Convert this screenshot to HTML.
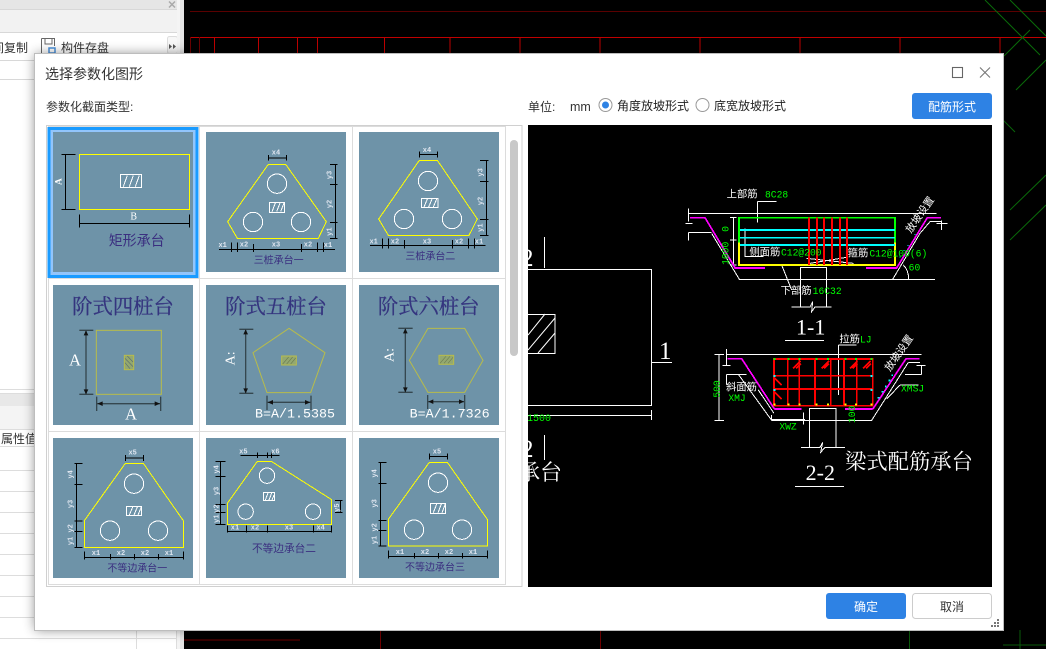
<!DOCTYPE html>
<html lang="zh"><head><meta charset="utf-8"><title>选择参数化图形</title>
<style>
html,body{margin:0;padding:0;background:#000;width:1046px;height:649px;overflow:hidden}
svg{position:absolute;left:0;top:0;display:block;font-family:"Liberation Sans","Noto Sans CJK SC",sans-serif}
.cr path,.cr rect,.cr circle{shape-rendering:crispEdges}
.ui{font-size:12px;fill:#333}
.y{fill:none;stroke:#ff0;stroke-width:3}
.o{fill:none;stroke:#b8bc4a;stroke-width:3}
.w{fill:none;stroke:#fff;stroke-width:3}
.k{fill:none;stroke:#000;stroke-width:3}
.d{fill:none;stroke:#35474f;stroke-width:4}
.s{font-family:"Liberation Mono",monospace;font-size:21px;font-weight:bold;fill:#dfe6f0;text-anchor:middle}
.l{fill:#3b2f80;text-anchor:middle}
.t{font-family:"Liberation Serif","Noto Serif CJK SC",serif;font-size:61px;fill:#35357f;stroke:#35357f;stroke-width:1;text-anchor:middle}
.A{font-family:"Liberation Serif",serif;font-size:50px;fill:#fff;text-anchor:middle}
.b{font-family:"Liberation Mono",monospace;font-size:40px;fill:#fff;text-anchor:middle}
.g{font-family:"Liberation Mono",monospace;font-size:29px;fill:#0f0}
.c{font-size:31px;fill:#fff}
</style></head><body>
<svg width="1046" height="649" viewBox="0 0 1046 649" xmlns="http://www.w3.org/2000/svg">
<defs>
<filter id="sh" x="-5%" y="-5%" width="110%" height="110%"><feGaussianBlur stdDeviation="6"/></filter>
<clipPath id="cad"><rect x="528" y="125" width="464" height="462"/></clipPath>
</defs>
<!-- app left panel -->
<rect x="0" y="0" width="180" height="649" fill="#fff"/>
<rect x="0" y="0" width="180" height="10" fill="#e6e6e6"/>
<rect x="0" y="10" width="180" height="22" fill="#f2f2f2"/>
<path d="M0 9.500H180M0 32.500H180M0 60.500H180M0 79.500H180" stroke="#d8d8d8"/>
<path d="M169 1.500L175 7.500M175 1.500L169 7.500" stroke="#aaa" stroke-width="1.500"/>
<text x="-8" y="52" font-size="12" fill="#333">间复制</text>
<path d="M41.500 38.500H54.500V46M41.500 38.500V53.500H48" fill="none" stroke="#666"/>
<path d="M45 39V44H52V39" fill="none" stroke="#666"/>
<rect x="49" y="48" width="6" height="5" fill="none" stroke="#4a90d9" stroke-width="1.500"/>
<text x="61" y="52" font-size="12" fill="#333">构件存盘</text>
<rect x="167.500" y="36.500" width="10" height="17" rx="2" fill="#f7f7f7" stroke="#ddd"/>
<path d="M169 44l3 2.500-3 2.500zM173 44l3 2.500-3 2.500z" fill="#555"/>
<rect x="0" y="394" width="180" height="12" fill="#e8e8e8"/>
<rect x="0" y="406" width="180" height="24" fill="#f4f4f4"/>
<path d="M0 389.500H180M0 393.500H180M0 429.500H180M0 446.500H180M0 470.500H180M0 491.500H180M0 512.500H180M0 533.500H180M0 554.500H180M0 575.500H180M0 596.500H180M0 617.500H180M0 638.500H180M136.500 430V649M176.500 430V649" stroke="#ddd"/>
<text x="1" y="443" font-size="12" fill="#333">属性值</text>
<rect x="177" y="0" width="3" height="649" fill="#f4f4f4"/>
<rect x="180" y="0" width="4" height="649" fill="#e4e4e4"/>
<!-- CAD background -->
<path d="M190 11.500H1046" stroke="#5a0000"/>
<path d="M214.500 37V54M258.500 37V54M297.500 37V54M317.500 37V54M384.500 37V54M450 37V54M520 37V54M600 37V54M700 37V54M800 37V54M900 37V54M1000 37V54M190 37.500H1046" stroke="#c00000"/>
<path d="M190.500 37V54M199.500 37V54" stroke="#6a0000"/>
<path d="M985 0L1040 55M1010 0L1046 36M1030 30L1004 56M1046 60L1016 90M1003 120L1015 132M1010 210L1046 175M1010 240L1046 205" stroke="#0a6a0a" fill="none"/>
<path d="M909.500 630V649" stroke="#0a5a0a"/>
<path d="M380.500 630V649M600.500 630V649M184 640H300" stroke="#700000"/>
<path d="M1020 630V649M1003 645H1046" stroke="#0a5a0a"/>
<!-- dialog -->
<rect x="35" y="54" width="968.500" height="576" fill="#000" opacity=".45" filter="url(#sh)"/>
<rect x="34.500" y="53.500" width="969" height="577" fill="#fff" stroke="#bdbdbd"/>
<text x="45" y="79" font-size="14" fill="#333">选择参数化图形</text>
<rect x="952.500" y="67.500" width="10" height="10" fill="none" stroke="#666" stroke-width="1.100"/>
<path d="M980 67.500L990 77.500M990 67.500L980 77.500" stroke="#777" stroke-width="1.100"/>
<text x="46" y="111" class="ui">参数化截面类型:</text>
<text x="528" y="111" class="ui">单位:</text>
<text x="570" y="111" font-size="12.500" fill="#333">mm</text>
<circle cx="605.500" cy="105" r="6.500" fill="#fff" stroke="#999"/><circle cx="605.500" cy="105" r="3.500" fill="#2e82e4"/>
<text x="617" y="110" font-size="12" fill="#222">角度放坡形式</text>
<circle cx="702.500" cy="105" r="6.500" fill="#fff" stroke="#999"/>
<text x="714" y="110" font-size="12" fill="#222">底宽放坡形式</text>
<rect x="912" y="93" width="80" height="26" rx="3" fill="#2e82e4"/>
<text x="952" y="111" font-size="12" fill="#fff" text-anchor="middle">配筋形式</text>
<rect x="826" y="593" width="80" height="26" rx="3" fill="#2e82e4"/>
<text x="866" y="611" font-size="12" fill="#fff" text-anchor="middle">确定</text>
<rect x="912.500" y="593.500" width="79" height="25" rx="3" fill="#fff" stroke="#ccc"/>
<text x="952" y="611" font-size="12" fill="#333" text-anchor="middle">取消</text>
<path d="M997 619h2v2h-2zM994 622h2v2h-2zM997 622h2v2h-2zM991 625h2v2h-2zM994 625h2v2h-2zM997 625h2v2h-2z" fill="#777"/>
<!-- list -->
<rect x="46.500" y="125.500" width="475.500" height="461" fill="#fff" stroke="#d0d0d0"/>
<path d="M48.500 126V585M199.500 126V585M352.500 126V585M505.500 126V585M48 278.500H506M48 431.500H506M48 584.500H506M48 126.500H506" stroke="#dcdcdc"/>
<rect x="510" y="140" width="8" height="216" rx="4" fill="#c8c8c8"/>
<rect x="49" y="128.500" width="148" height="148" fill="#92c5fb" stroke="#1a9bff" stroke-width="3"/>
<rect x="53" y="132" width="140" height="140" fill="#6e93a8"/>
<rect x="206" y="132" width="140" height="140" fill="#6e93a8"/>
<rect x="359" y="132" width="140" height="140" fill="#6e93a8"/>
<rect x="53" y="285" width="140" height="140" fill="#6e93a8"/>
<rect x="206" y="285" width="140" height="140" fill="#6e93a8"/>
<rect x="359" y="285" width="140" height="140" fill="#6e93a8"/>
<rect x="53" y="438" width="140" height="140" fill="#6e93a8"/>
<rect x="206" y="438" width="140" height="140" fill="#6e93a8"/>
<rect x="359" y="438" width="140" height="140" fill="#6e93a8"/>

<!-- row 1 -->
<g class="cr" transform="translate(40,120) scale(.33333)">
<rect x="118" y="103" width="331" height="165" class="y"/>
<rect x="241" y="163" width="64" height="40" class="w"/>
<path d="M250 200L262 166M268 200L280 166M286 200L298 166" class="w"/>
<path d="M64 103H107M64 268H107M77 103V268M118 283V322M449 283V322M118 310H449" class="k"/>
<text transform="translate(65,185) rotate(-90)" font-family="Liberation Serif,serif" font-size="28" font-weight="bold" fill="#fff" text-anchor="middle">A</text>
<text x="281" y="299" font-family="Liberation Serif,serif" font-size="30" fill="#fff" text-anchor="middle">B</text>
<text x="290" y="376" class="l" font-size="42">矩形承台</text>

<path d="M685 133H737L859 305L835 355H592L563 305Z" class="y"/>
<circle cx="711" cy="191" r="29" class="w"/><circle cx="639" cy="306" r="29" class="w"/><circle cx="783" cy="306" r="29" class="w"/>
<rect x="688" y="247" width="46" height="30" class="w"/><path d="M696 275L706 249M710 275L720 249M722 275L732 249" class="w"/>
<path d="M686 105V122M740 105V122M686 114H740M870 133H893M870 193H893M870 307H893M870 355H893M887 133V355M537 388H885M575 368V396M592 368V396M640 372V396M784 372V396M832 368V396M850 368V396" class="k"/>
<text x="708" y="103" class="s">x4</text><text x="548" y="381" class="s">x1</text><text x="612" y="380" class="s">x2</text><text x="708" y="380" class="s">x3</text><text x="804" y="380" class="s">x2</text><text x="864" y="381" class="s">x1</text>
<text transform="translate(875,165) rotate(-90)" class="s">y3</text><text transform="translate(875,252) rotate(-90)" class="s">y2</text><text transform="translate(875,335) rotate(-90)" class="s">y1</text>
<text x="716" y="431" class="l" font-size="30">三桩承台一</text>
</g>
<g class="cr" transform="translate(350,120) scale(.33333)">
<path d="M208 121H262L382 297L357 346H115L86 297Z" class="y"/>
<circle cx="234" cy="183" r="29" class="w"/><circle cx="162" cy="297" r="29" class="w"/><circle cx="306" cy="297" r="29" class="w"/>
<rect x="214" y="235" width="50" height="28" class="w"/><path d="M222 261L232 237M236 261L246 237M250 261L260 237" class="w"/>
<path d="M208 94V113M262 94V113M208 104H262M390 121H416M390 184H416M390 298H416M390 346H416M409 121V346M60 377H407M97 356V386M115 356V386M163 360V386M307 360V386M355 356V386M373 356V386" class="k"/>
<text x="231" y="96" class="s">x4</text><text x="71" y="371" class="s">x1</text><text x="135" y="370" class="s">x2</text><text x="231" y="370" class="s">x3</text><text x="327" y="370" class="s">x2</text><text x="387" y="371" class="s">x1</text>
<text transform="translate(398,157) rotate(-90)" class="s">y3</text><text transform="translate(398,243) rotate(-90)" class="s">y2</text><text transform="translate(398,323) rotate(-90)" class="s">y1</text>
<text x="241" y="419" class="l" font-size="30">三桩承台二</text>
</g>

<!-- row 2 -->
<g transform="translate(40,280) scale(.33333)">
<text x="249" y="100" class="t">阶式四桩台</text>
<rect x="169" y="151" width="195" height="192" class="o"/>
<rect x="253" y="226" width="28" height="43" fill="#93a870" stroke="#b8bc4a" stroke-width="3"/>
<path d="M255 235L279 260M255 248L270 266M262 228L279 246" stroke="#5c6e70" stroke-width="2"/>
<path d="M118 151H160M118 343H160M138 151V343M170 350V393M362 350V393M170 371H362" class="d"/>
<path d="M131 166L138 151L145 166ZM131 328L138 343L145 328ZM188 364L172 371L188 378ZM344 364L360 371L344 378Z" fill="#111"/>
<text x="105" y="256" class="A">A</text><text x="273" y="418" class="A">A</text>
<text x="708" y="100" class="t">阶式五桩台</text>
<path d="M747 145L855 218L812 338H681L639 218Z" class="o"/>
<rect x="725" y="228" width="44" height="27" fill="#93a870" stroke="#b8bc4a" stroke-width="3"/>
<path d="M728 252L746 231M740 252L758 231M752 252L767 234" stroke="#6e7e50" stroke-width="2"/>
<path d="M598 148H640M598 340H640M617 148V340M681 347V390M813 347V390M681 367H813" class="d"/>
<path d="M610 163L617 148L624 163ZM610 325L617 340L624 325ZM699 360L683 367L699 374ZM795 360L811 367L795 374Z" fill="#111"/>
<text transform="translate(583,235) rotate(-90)" class="A" style="font-size:42px">A:</text>
<text x="765" y="412" class="b">B=A/1.5385</text>
</g>
<g transform="translate(350,280) scale(.33333)">
<text x="236" y="100" class="t">阶式六桩台</text>
<path d="M234 145H344L399 241L344 337H234L178 241Z" class="o"/>
<rect x="267" y="226" width="44" height="27" fill="#93a870" stroke="#b8bc4a" stroke-width="3"/>
<path d="M270 250L288 229M282 250L300 229M294 250L309 232" stroke="#6e7e50" stroke-width="2"/>
<path d="M145 145H188M145 337H188M166 145V337M233 345V387M344 345V387M233 365H344" class="d"/>
<path d="M159 160L166 145L173 160ZM159 322L166 337L173 322ZM250 358L235 365L250 372ZM327 358L342 365L327 372Z" fill="#111"/>
<text transform="translate(130,225) rotate(-90)" class="A" style="font-size:42px">A:</text>
<text x="299" y="412" class="b">B=A/1.7326</text>
</g>

<!-- row 3 -->
<g class="cr" transform="translate(40,430) scale(.33333)">
<path d="M256 100H310L430 272V352H133V272Z" class="y"/>
<circle cx="282" cy="161" r="29" class="w"/><circle cx="210" cy="302" r="29" class="w"/><circle cx="354" cy="302" r="29" class="w"/>
<rect x="259" y="229" width="46" height="28" class="w"/><path d="M268 255L278 231M282 255L292 231M294 255L304 231" class="w"/>
<path d="M256 75V93M310 75V93M256 84H310M103 100H128M103 163H128M103 273H128M103 304H128M103 352H128M109 100V352M133 383H430M133 365V388M211 372V388M283 372V388M355 372V388M430 365V388" class="k"/>
<text x="278" y="74" class="s">x5</text><text x="168" y="375" class="s">x1</text><text x="243" y="375" class="s">x2</text><text x="315" y="375" class="s">x2</text><text x="387" y="375" class="s">x1</text>
<text transform="translate(98,133) rotate(-90)" class="s">y4</text><text transform="translate(98,222) rotate(-90)" class="s">y3</text><text transform="translate(98,295) rotate(-90)" class="s">y2</text><text transform="translate(98,333) rotate(-90)" class="s">y1</text>
<text x="292" y="424" class="l" font-size="30">不等边承台一</text>

<path d="M652 94H694L875 209V283H562V220Z" class="y"/>
<circle cx="681" cy="137" r="23" class="w"/><circle cx="617" cy="245" r="23" class="w"/><circle cx="819" cy="245" r="23" class="w"/>
<rect x="670" y="187" width="34" height="25" class="w"/><path d="M676 210L684 189M687 210L695 189M696 210L702 195" class="w"/>
<path d="M601 76H718M653 68V84M683 68V84M694 68V84M526 94H556M526 139H556M526 223H556M526 247H556M526 283H556M541 94V283M885 211H908M885 247H908M902 211V247M562 304H874M562 286V308M619 286V308M682 286V308M820 286V308M874 286V308" class="k"/>
<text x="610" y="70" class="s">x5</text><text x="706" y="70" class="s">x6</text><text x="585" y="298" class="s">x1</text><text x="645" y="298" class="s">x2</text><text x="747" y="298" class="s">x3</text><text x="842" y="298" class="s">x4</text>
<text transform="translate(536,118) rotate(-90)" class="s">y4</text><text transform="translate(536,183) rotate(-90)" class="s">y3</text><text transform="translate(536,236) rotate(-90)" class="s">y2</text><text transform="translate(536,266) rotate(-90)" class="s">y1</text><text transform="translate(897,233) rotate(-90)" class="s">y5</text>
<text x="732" y="366" class="l" font-size="32">不等边承台二</text>
</g>
<g class="cr" transform="translate(350,430) scale(.33333)">
<path d="M238 97H292L412 268V348H115V268Z" class="y"/>
<circle cx="264" cy="158" r="29" class="w"/><circle cx="192" cy="299" r="29" class="w"/><circle cx="336" cy="299" r="29" class="w"/>
<rect x="241" y="220" width="46" height="30" class="w"/><path d="M250 248L260 222M264 248L274 222M276 248L286 222" class="w"/>
<path d="M238 71V89M292 71V89M238 80H292M85 97H110M85 160H110M85 271H110M85 302H110M85 348H110M92 97V348M115 380H412M115 362V385M193 369V385M265 369V385M337 369V385M412 362V385" class="k"/>
<text x="261" y="71" class="s">x5</text><text x="150" y="372" class="s">x1</text><text x="225" y="372" class="s">x2</text><text x="297" y="372" class="s">x2</text><text x="369" y="372" class="s">x1</text>
<text transform="translate(80,130) rotate(-90)" class="s">y4</text><text transform="translate(80,220) rotate(-90)" class="s">y3</text><text transform="translate(80,292) rotate(-90)" class="s">y2</text><text transform="translate(80,330) rotate(-90)" class="s">y1</text>
<text x="255" y="421" class="l" font-size="30">不等边承台三</text>
</g>

<!-- CAD preview -->
<rect x="528" y="125" width="464" height="462" fill="#000"/>
<g clip-path="url(#cad)">
<path d="M544.500 237V268M528 269.500H651.500V405.500H528M651.500 362.500H672M544.500 435V460M528 415.500H651M651.500 410V420" stroke="#fff" fill="none"/>
<rect x="520" y="314.500" width="35" height="39" fill="none" stroke="#fff"/>
<path d="M528 335L545 314M528 350L555 318M538 353L555 333" stroke="#fff"/>
<text x="521" y="266" font-family="Liberation Serif,serif" font-size="25" fill="#fff">2</text>
<text x="659" y="359" font-family="Liberation Serif,serif" font-size="25" fill="#fff">1</text>
<text x="521" y="457" font-family="Liberation Serif,serif" font-size="25" fill="#fff">2</text>
<text x="539" y="421" font-family="Liberation Mono,monospace" font-size="10" fill="#0f0" text-anchor="middle">1500</text>
<text x="518" y="480" font-size="22" font-family="Liberation Serif,Noto Serif CJK SC,serif" fill="#fff">承台</text>
</g>

<!-- section 1-1 -->
<g class="cr" transform="translate(680,180) scale(.33333)">
<path d="M25 100H770M25 85V125M25 158V182M25 158H95M785 125H750L720 160M785 122V150M95 160L178 298H765M720 160L638 298M686 298C686 280 680 265 670 255M232 64H290M232 64V128M160 113V255M150 113H170M150 180H170M150 255H170M195 145V230H250M305 255L335 330M361 380V262H440V380M335 381H390L398 365L395 395L405 381H455M16 130H38M770 130H802M380 235L520 250M390 250L500 232" stroke="#fff" stroke-width="3" fill="none"/>
<path d="M30 113H75L160 255L165 264H255M783 113H742L650 264H558" stroke="#f0f" stroke-width="5" fill="none"/>
<path d="M177 187V255H645V187" stroke="#ff0" stroke-width="5" fill="none"/>
<path d="M177 187V113H645V187" stroke="#0f0" stroke-width="5" fill="none"/>
<path d="M180 150H645M180 173H645M180 195H645" stroke="#0ff" stroke-width="5"/>
<path d="M387 113V255M411 113V255M432 113V255M456 113V255M480 113V255M501 113V255" stroke="#f00" stroke-width="5"/>
<path d="M703 162h3v3h-3zM682 195h3v3h-3zM670 210h3v3h-3zM658 230h3v3h-3z" fill="#0ff"/>
<text x="140" y="53" class="c">上部筋</text><text x="255" y="53" class="g">8C28</text>
<text x="208" y="227" class="c">侧面筋</text><text x="303" y="227" class="g">C12@200</text>
<text x="503" y="230" class="c">箍筋</text><text x="568" y="230" class="g">C12@100(6)</text>
<text x="302" y="342" class="c">下部筋</text><text x="398" y="342" class="g">16C32</text>
<text x="686" y="272" class="g">60</text>
<text transform="translate(145,147) rotate(-90)" class="g" text-anchor="middle">0</text>
<text transform="translate(145,220) rotate(-90)" class="g" text-anchor="middle">1000</text>
<text transform="translate(728,110) rotate(-55)" class="c" text-anchor="middle">放坡设置</text>
</g>

<!-- section 2-2 -->
<g class="cr" transform="translate(700,325) scale(.33333)">
<path d="M80 88H665M80 72V122M80 148H140M80 148V178M615 148H665M665 120V148M44 88H72M44 286H72M57 88V286M625 112H660M625 112L515 286H215L115 148M68 122H92M650 122H676M415 60V210M415 60H470M175 195L222 265M215 286V270M310 262V298M215 283H315M328 367V250H408V367M303 367H360L368 352L362 382L375 367H435M255 46H372M285 484H432M600 180H655M600 180L560 222" stroke="#fff" stroke-width="3" fill="none"/>
<path d="M83 101H125L222 250L225 252H305M658 101H618L520 250L517 252H435" stroke="#f0f" stroke-width="5" fill="none"/>
<path d="M222 102H518V242H222ZM263 102V242M298 102V242M345 102V242M392 102V242M432 102V242M470 102V242M222 152H518M222 192H518M280 130L302 108M288 130L302 116M365 130L387 108M373 130L387 116M450 130L472 108M458 130L472 116M490 130L512 108M498 130L512 116M222 158L245 180M222 200L245 222" stroke="#f00" stroke-width="5" fill="none"/>
<path d="M220 99h6v6h-6zM262 99h6v6h-6zM295 99h6v6h-6zM346 99h6v6h-6zM381 99h6v6h-6zM433 99h6v6h-6zM465 99h6v6h-6zM511 99h6v6h-6z" fill="#0f0"/>
<path d="M220 235h6v6h-6zM262 235h6v6h-6zM295 235h6v6h-6zM346 235h6v6h-6zM381 235h6v6h-6zM433 235h6v6h-6zM465 235h6v6h-6zM511 235h6v6h-6z" fill="#ff0"/>
<path d="M220 150h6v6h-6zM220 192h6v6h-6zM511 150h6v6h-6zM511 192h6v6h-6zM574 148h5v5h-5zM566 164h5v5h-5zM555 182h5v5h-5zM545 198h5v5h-5zM533 216h5v5h-5z" fill="#0ff"/>
<text x="418" y="52" class="c">拉筋</text><text x="480" y="52" class="g">LJ</text>
<text x="78" y="196" class="c">斜面筋</text><text x="85" y="228" class="g">XMJ</text>
<text x="238" y="313" class="g">XWZ</text><text x="603" y="200" class="g">XMSJ</text>
<text transform="translate(60,192) rotate(-90)" class="g" text-anchor="middle">500</text>
<text transform="translate(465,268) rotate(-90)" class="g" text-anchor="middle">100</text>
<text transform="translate(605,90) rotate(-55)" class="c" text-anchor="middle">放坡设置</text>
<text x="332" y="28" font-family="Liberation Serif,serif" font-size="66" fill="#fff" text-anchor="middle">1-1</text>
<text x="361" y="465" font-family="Liberation Serif,serif" font-size="66" fill="#fff" text-anchor="middle">2-2</text>
<text x="435" y="432" font-family="Liberation Serif,Noto Serif CJK SC,serif" font-size="64" fill="#fff">梁式配筋承台</text>
</g>
</svg>
</body></html>
